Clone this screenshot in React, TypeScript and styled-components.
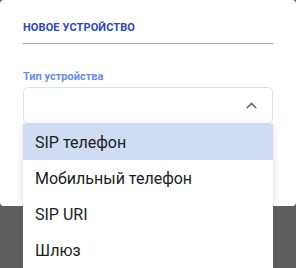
import * as React from "react";
import styled, { createGlobalStyle } from "styled-components";
import { ChevronUp } from "lucide-react";

const GlobalStyle = createGlobalStyle`
  html, body {
    margin: 0;
    padding: 0;
    background: #5f5f5f;
    font-family: Roboto, "Liberation Sans", sans-serif;
  }
  body {
    min-height: 268px;
  }
`;

const Card = styled.div`
  position: relative;
  background: #fff;
  height: 206px;
  border-radius: 4px;
  box-sizing: border-box;
  padding: 20px 23px 0;
`;

const Title = styled.div`
  font-size: 11px;
  line-height: 16px;
  font-weight: 700;
  color: #2747c4;
  text-transform: uppercase;
  letter-spacing: 0.1px;
`;

const Divider = styled.div`
  height: 1px;
  background: #a9a9a9;
  margin-top: 7px;
`;

const Field = styled.div`
  position: relative;
  margin-top: 26px;
`;

const Label = styled.div`
  font-size: 11px;
  line-height: 14px;
  font-weight: 700;
  color: #6a8cf2;
  margin-bottom: 3px;
`;

const SelectBox = styled.div`
  height: 37px;
  box-sizing: border-box;
  border: 1px solid #dbe2ef;
  border-radius: 5px;
  display: flex;
  align-items: center;
  justify-content: flex-end;
  padding-right: 12px;
  color: #6a6c72;
`;

const Menu = styled.ul`
  position: absolute;
  z-index: 10;
  left: 0;
  right: 0;
  top: 54px;
  margin: 0;
  padding: 0;
  list-style: none;
  background: #fff;
  border-radius: 0 0 4px 4px;
  box-shadow: 0 2px 8px rgba(0, 0, 0, 0.14);
`;

const Item = styled.li<{ $active?: boolean }>`
  height: 36px;
  display: flex;
  align-items: center;
  padding-left: 12px;
  font-size: 16px;
  color: #202124;
  background: ${(p) => (p.$active ? "#d0dcf3" : "#fff")};
`;

const options = ["SIP телефон", "Мобильный телефон", "SIP URI", "Шлюз"];

export default function App() {
  return (
    <>
      <GlobalStyle />
      <Card>
        <Title>Новое устройство</Title>
        <Divider />
        <Field>
          <Label>Тип устройства</Label>
          <SelectBox>
            <ChevronUp size={17} strokeWidth={2.2} />
          </SelectBox>
          <Menu>
            {options.map((o, i) => (
              <Item key={o} $active={i === 0}>
                {o}
              </Item>
            ))}
          </Menu>
        </Field>
      </Card>
    </>
  );
}
